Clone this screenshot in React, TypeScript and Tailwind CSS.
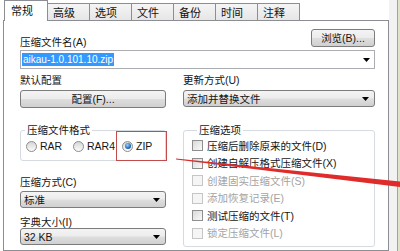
const font = "font-['Liberation_Sans','Noto_Sans_CJK_SC',sans-serif]";

const btnBg =
  "bg-[linear-gradient(#f4f4f4,#ececec_48%,#dedede_52%,#d0d0d0)] border border-[#7c7c7c] rounded-[3px]";

function Arrow() {
  return (
    <svg width="7" height="4" viewBox="0 0 7 4" className="shrink-0">
      <path d="M0 0h7L3.5 4z" fill="#000" />
    </svg>
  );
}

function Tab({ label, active }: { label: string; active?: boolean }) {
  if (active) {
    return (
      <div className="relative z-10 -mb-px h-[21px] w-[44px] border border-b-0 border-[#8c8e94] bg-white pl-[6px] pt-[3px] text-[11px] leading-[14px] text-[#111]">
        {label}
      </div>
    );
  }
  return (
    <div className="-ml-px h-[17px] w-[43px] border border-b-0 border-[#8c8e94] bg-[linear-gradient(#f5f5f5,#e6e6e6)] pl-[5px] pt-[2px] text-[11px] leading-[14px] text-[#111]">
      {label}
    </div>
  );
}

function Radio({ label, checked, width }: { label: string; checked?: boolean; width: string }) {
  return (
    <div className={`flex h-[14px] items-center gap-[3px] ${width}`}>
      <div className="flex h-[11px] w-[11px] items-center justify-center rounded-full border border-[#8a8c8e] bg-[linear-gradient(#d6d6d6,#fbfbfb)]">
        {checked && (
          <div className="h-[6px] w-[6px] rounded-full bg-[radial-gradient(circle_at_40%_35%,#9fd2ff,#2a73c0_55%,#0d2f5b)]" />
        )}
      </div>
      <span className="h-[12px] leading-[12px]">{label}</span>
    </div>
  );
}

function Check({ label, disabled }: { label: string; disabled?: boolean }) {
  return (
    <div className="flex h-[17.5px] items-center gap-[4px]">
      <div
        className={
          disabled
            ? "h-[11px] w-[11px] border border-[#c6c6c6] bg-[#f5f5f5]"
            : "h-[11px] w-[11px] border border-[#8f8f8f] bg-[linear-gradient(135deg,#d9d9d9,#fafafa)]"
        }
      />
      <span className={`h-[12px] leading-[12px] ${disabled ? "text-[#a3a3a3]" : "text-[#151515]"}`}>{label}</span>
    </div>
  );
}

function DropList({ value }: { value: string }) {
  return (
    <div className={`flex h-[17px] items-center justify-between pl-[3px] pr-[5px] ${btnBg}`}>
      <span className="h-[12px] leading-[12px]">{value}</span>
      <Arrow />
    </div>
  );
}

function Label({ text, className }: { text: string; className: string }) {
  return <span className={`block h-[12px] leading-[12px] ${className}`}>{text}</span>;
}

export default function App() {
  const tabs = ["高级", "选项", "文件", "备份", "时间", "注释"];
  return (
    <div className={`relative flex h-[251px] w-[400px] overflow-hidden bg-white text-[10.5px] text-[#151515] ${font}`}>
      <div className="flex w-[389px] flex-col">
        {/* tabs */}
        <div className="flex h-[20px] items-end pl-[4px]">
          <Tab label="常规" active />
          {tabs.map((t) => (
            <Tab key={t} label={t} />
          ))}
        </div>

        {/* page */}
        <div className="ml-[3px] flex-1 border border-[#8c8e94] bg-white pl-[16px] pr-[13px] pt-[8px]">
          <div className="flex h-[18px] items-start justify-between">
            <Label text="压缩文件名(A)" className="mt-[7px]" />
            <div className={`flex h-[18px] w-[64px] items-center justify-center leading-[12px] ${btnBg}`}>
              浏览(B)...
            </div>
          </div>
          <div className="mt-[3px] flex h-[19px] items-center justify-between border border-[#abadb3] bg-white pl-[1px] pr-[4px]">
            <span className="h-[13px] bg-[#3399ff] px-[1px] text-[10px] leading-[13px] text-white">aikau-1.0.101.10.zip</span>
            <Arrow />
          </div>

          <div className="flex gap-[17px]">
            {/* left column */}
            <div className="flex w-[146px] flex-col">
              <Label text="默认配置" className="mt-[5px]" />
              <div className={`mt-[4px] flex h-[18px] items-center justify-center leading-[12px] ${btnBg}`}>
                配置(F)...
              </div>
              <fieldset className="mt-[16px] h-[37px] rounded-[3px] border border-[#d5dbe0]">
                <legend className="ml-[4px] h-[12px] px-[2px] leading-[12px]">压缩文件格式</legend>
                <div className="mt-[3px] flex pl-[5px]">
                  <Radio label="RAR" width="w-[47px]" />
                  <Radio label="RAR4" width="w-[49px]" />
                  <Radio label="ZIP" checked width="w-[40px]" />
                </div>
              </fieldset>
              <Label text="压缩方式(C)" className="mt-[15px]" />
              <div className="mt-[3px]">
                <DropList value="标准" />
              </div>
              <Label text="字典大小(I)" className="mt-[8px]" />
              <DropList value="32 KB" />
            </div>

            {/* right column */}
            <div className="flex w-[192px] flex-col">
              <Label text="更新方式(U)" className="mt-[5px]" />
              <div className="mt-[4px]">
                <DropList value="添加并替换文件" />
              </div>
              <fieldset className="mt-[17px] h-[123px] rounded-[3px] border border-[#d5dbe0] pl-[8px]">
                <legend className="ml-[5px] h-[12px] px-[2px] leading-[12px]">压缩选项</legend>
                <div className="mt-[1px] flex flex-col">
                  <Check label="压缩后删除原来的文件(D)" />
                  <Check label="创建自解压格式压缩文件(X)" />
                  <Check label="创建固实压缩文件(S)" disabled />
                  <Check label="添加恢复记录(E)" disabled />
                  <Check label="测试压缩的文件(T)" />
                  <Check label="锁定压缩文件(L)" disabled />
                </div>
              </fieldset>
            </div>
          </div>
        </div>
      </div>
      <div className="w-[8px] bg-[#f2f2f2]" />
      <div className="w-px bg-[#9ea3a8]" />
      <div className="flex-1 bg-[#dfe3cb]" />

      {/* annotation overlays */}
      <div className="absolute left-[116px] top-[131px] h-[30px] w-[51px] border border-[#c24c4c]" />
      <svg className="absolute left-0 top-0" width="400" height="251" viewBox="0 0 400 251">
        <polygon points="176,158.4 400,181.5 400,187 176,159.6" fill="#e02b2b" />
      </svg>
    </div>
  );
}
